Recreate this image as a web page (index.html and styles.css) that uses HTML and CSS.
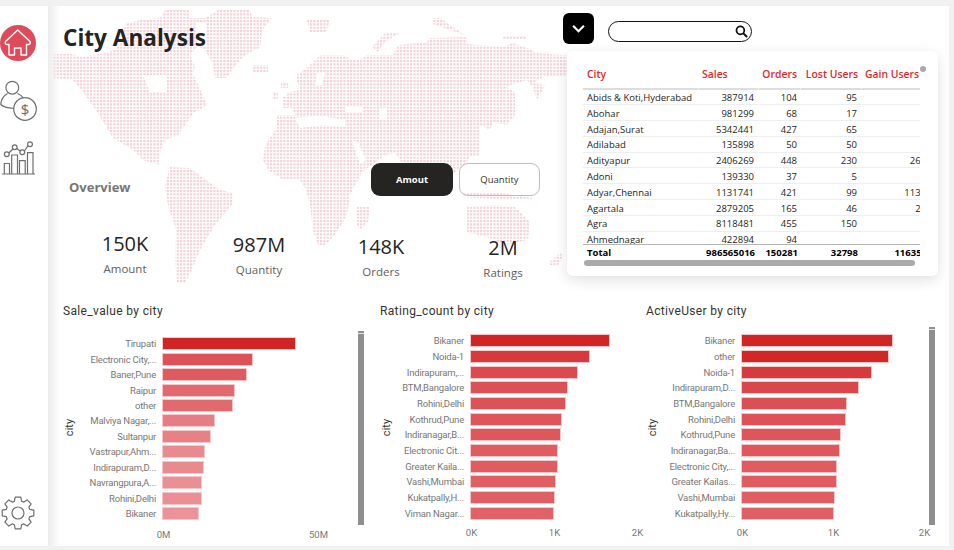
FILE: index.html
```html
<!DOCTYPE html>
<html lang="en">
<head>
  <meta charset="UTF-8">
  <title>City Analysis</title>
  <link rel="stylesheet" href="styles.css">
</head>
<body>
<div class="report">
  <!-- dotted world map, page coordinates -->
  <svg class="world_map" viewBox="0 0 954 300" width="954" height="300">
    <defs>
      <pattern id="dots" patternUnits="userSpaceOnUse" width="10" height="10">
        <path fill="#f3d3d9" d="M0 0h2.2v2.2H0zM3.33 0h2.2v2.2H3.33zM6.67 0h2.2v2.2H6.67zM0 3.33h2.2v2.2H0zM3.33 3.33h2.2v2.2H3.33zM6.67 3.33h2.2v2.2H6.67zM0 6.67h2.2v2.2H0zM3.33 6.67h2.2v2.2H3.33zM6.67 6.67h2.2v2.2H6.67z"></path>
      </pattern>
    </defs>
    <path fill="url(#dots)" fill-rule="evenodd" d="M53 54L72 54 80 57 100 54 115 50 122 38 125 24 140 20 160 18 165 10 190 10 190 18 205 18 218 10 250 10 252 17 272 18 262 30 260 48 250 52 240 60 226 78 215 78 212 62 205 50 198 46 190 55 195 66 193 74 205 100 207 106 195 112 185 125 178 135 165 140 160 152 160 165 143 160 133 150 113 138 97 112 83 92 73 80 53 78Z
      M143 75L167 75 167 92 150 92Z
      M196 22L206 22 206 46 198 46Z
      M253 65L268 65 268 72 253 72Z
      M273 92L278 92 278 100 273 100Z M281 82L288 82 288 88 281 88Z
      M307 20L330 20 326 32 310 32Z M372 47L385 33 400 33 385 42 378 52Z M433 18L440 18 465 35 450 30 433 24Z M503 36L526 36 526 39 503 39Z
      M170 167L190 168 220 190 233 193 232 205 215 225 200 250 192 270 185 283 177 283 175 260 176 230 168 205 165 185Z
      M320 55L343 55 353 60 363 58 367 55 393 55 398 45 427 42 430 38 467 37 467 44 503 47 513 43 527 48 537 53 563 55 570 55 570 75 543 77 533 83 545 85 537 100 533 88 527 80 510 85 507 88 515 92 515 117 510 120 507 125 493 122 490 130 480 125 480 155 470 157 465 165 458 170 452 175 452 193 444 193 440 175 432 170 428 165 417 180 410 180 400 160 395 153 385 155 372 165 362 172 358 180 350 195 347 215 335 235 325 245 318 245 313 230 310 205 306 190 300 180 283 180 268 170 263 160 265 145 277 128 277 115 295 115 292 108 283 108 283 97 290 92 300 90 297 80 297 75 307 68Z
      M295 118L320 116 345 120 345 127 322 125 300 128Z M345 107L362 107 362 112 345 112Z M380 108L387 108 387 120 380 120Z M318 72L325 72 322 85 315 85Z M352 140L358 142 366 160 360 164Z
      M357 207L370 207 368 222 360 230 357 225Z
      M467 207L495 205 515 207 530 222 528 240 505 245 490 238 467 232Z
      M463 193L500 193 533 198 533 200 495 199 463 197Z
      M550 262L560 253 563 256 558 265 550 265Z"></path>
  </svg>

  <nav class="sidebar">
    <svg class="home_icon" viewBox="0 0 36 36" width="36" height="36">
      <circle cx="18" cy="18" r="18" fill="#de4b5b"></circle>
      <path d="M17.7 5L5.5 16.5Q4.5 19.5 7 19.5H9V30H14.5V23H21V30H26.5V19.5H28.5Q31 19.5 30 16.5Z" fill="none" stroke="#fff" stroke-width="1.4" stroke-linejoin="round"></path>
    </svg>
    <svg class="nav_icon" viewBox="0 0 38 42" width="38" height="42">
      <circle cx="12.3" cy="7.7" r="6.4"></circle>
      <path d="M14 28.5C8 28 3 27 .8 24.5 1 19 4 15.5 7.5 13.5M17.5 13.5C20 14.5 22 16 23.5 18"></path>
      <circle cx="25" cy="29" r="11.3"></circle>
      <text x="25" y="34.5" text-anchor="middle" class="coin_text">$</text>
    </svg>
    <svg class="nav_icon" viewBox="0 0 38 36" width="38" height="36">
      <path d="M4.3 32.7V22.5H9.5V32.7M11.7 32.7V14H17.5V32.7M19.5 32.7V19.7H25.2V32.7M27.5 32.7V11.7H33V32.7M2 33H35"></path>
      <path d="M8.8 12L13 8M16.7 7.5L20.5 10.2M24.3 10L28 4.8"></path>
      <circle cx="6.8" cy="13.2" r="2.4"></circle>
      <circle cx="14.7" cy="6.2" r="2.4"></circle>
      <circle cx="22.3" cy="11.2" r="2.4"></circle>
      <circle cx="30" cy="3.2" r="2.4"></circle>
    </svg>
    <svg class="nav_icon gear_icon" viewBox="-17 -17 34 34" width="34" height="34">
      <polygon stroke-linejoin="round" points="-3.6,-11.8 -2.8,-15.8 2.8,-15.8 3.6,-11.8 5.8,-10.9 9.2,-13.1 13.1,-9.2 10.9,-5.8 11.8,-3.6 15.8,-2.8 15.8,2.8 11.8,3.6 10.9,5.8 13.1,9.2 9.2,13.1 5.8,10.9 3.6,11.8 2.8,15.8 -2.8,15.8 -3.6,11.8 -5.8,10.9 -9.2,13.1 -13.1,9.2 -10.9,5.8 -11.8,3.6 -15.8,2.8 -15.8,-2.8 -11.8,-3.6 -10.9,-5.8 -13.1,-9.2 -9.2,-13.1 -5.8,-10.9"></polygon>
      <circle r="6"></circle>
    </svg>
  </nav>

  <main class="content">
    <section class="hero">
      <div class="hero_left">
        <h1 class="page_title">City Analysis</h1>
        <div class="overview_row">
          <span class="overview_label">Overview</span>
          <div class="toggle_group">
            <button class="toggle toggle_on">Amout</button>
            <button class="toggle">Quantity</button>
          </div>
        </div>
        <div class="kpi_row">
          <div class="kpi"><div class="kpi_value">150K</div><div class="kpi_label">Amount</div></div>
          <div class="kpi"><div class="kpi_value">987M</div><div class="kpi_label">Quantity</div></div>
          <div class="kpi"><div class="kpi_value">148K</div><div class="kpi_label">Orders</div></div>
          <div class="kpi"><div class="kpi_value">2M</div><div class="kpi_label">Ratings</div></div>
        </div>
      </div>

      <div class="hero_right">
        <div class="controls">
          <button class="dropdown_btn">
            <svg viewBox="0 0 16 10" width="15" height="9"><path d="M2 2L8 8 14 2" fill="none" stroke="#fff" stroke-width="2.4"></path></svg>
          </button>
          <div class="search_box">
            <svg viewBox="0 0 14 14" width="13" height="13"><circle cx="5.8" cy="5.8" r="4.2" fill="none" stroke="#111" stroke-width="1.9"></circle><path d="M9 9L13 13" stroke="#111" stroke-width="2.2"></path></svg>
          </div>
        </div>
        <div class="table_card">
          <span class="scroll_dot"></span>
          <div class="city_table">
            <div class="row head_row">
              <div class="cell col_left">City</div><div class="cell col_left">Sales</div><div class="cell">Orders</div><div class="cell">Lost Users</div><div class="cell col_left">Gain Users</div>
            </div>
            <div class="table_body">
              <div class="row"><div class="cell col_left">Abids &amp; Koti,Hyderabad</div><div class="cell">387914</div><div class="cell">104</div><div class="cell">95</div><div class="cell"></div></div>
              <div class="row"><div class="cell col_left">Abohar</div><div class="cell">981299</div><div class="cell">68</div><div class="cell">17</div><div class="cell"></div></div>
              <div class="row"><div class="cell col_left">Adajan,Surat</div><div class="cell">5342441</div><div class="cell">427</div><div class="cell">65</div><div class="cell"></div></div>
              <div class="row"><div class="cell col_left">Adilabad</div><div class="cell">135898</div><div class="cell">50</div><div class="cell">50</div><div class="cell"></div></div>
              <div class="row"><div class="cell col_left">Adityapur</div><div class="cell">2406269</div><div class="cell">448</div><div class="cell">230</div><div class="cell">265</div></div>
              <div class="row"><div class="cell col_left">Adoni</div><div class="cell">139330</div><div class="cell">37</div><div class="cell">5</div><div class="cell"></div></div>
              <div class="row"><div class="cell col_left">Adyar,Chennai</div><div class="cell">1131741</div><div class="cell">421</div><div class="cell">99</div><div class="cell">1130</div></div>
              <div class="row"><div class="cell col_left">Agartala</div><div class="cell">2879205</div><div class="cell">165</div><div class="cell">46</div><div class="cell">24</div></div>
              <div class="row"><div class="cell col_left">Agra</div><div class="cell">8118481</div><div class="cell">455</div><div class="cell">150</div><div class="cell"></div></div>
              <div class="row"><div class="cell col_left">Ahmednagar</div><div class="cell">422894</div><div class="cell">94</div><div class="cell"></div><div class="cell"></div></div>
            </div>
            <div class="row total_row">
              <div class="cell col_left">Total</div><div class="cell">986565016</div><div class="cell">150281</div><div class="cell">32798</div><div class="cell">116350</div>
            </div>
          </div>
          <div class="table_scroll"></div>
        </div>
      </div>
    </section>

    <section class="charts">
      <div class="chart chart_sales">
        <div class="chart_title">Sale_value by city</div>
        <div class="plot">
          <div class="axis_name"><span>city</span></div>
          <div class="bars_area">
            <div class="bars">
              <div class="bar_row"><span class="bar_label">Tirupati</span><span class="bar" style="width:132px;background:#d12424"></span></div>
              <div class="bar_row"><span class="bar_label">Electronic City,...</span><span class="bar" style="width:89px;background:#dc5258"></span></div>
              <div class="bar_row"><span class="bar_label">Baner,Pune</span><span class="bar" style="width:83px;background:#de5a5e"></span></div>
              <div class="bar_row"><span class="bar_label">Raipur</span><span class="bar" style="width:71px;background:#e26a6e"></span></div>
              <div class="bar_row"><span class="bar_label">other</span><span class="bar" style="width:69px;background:#e26a6e"></span></div>
              <div class="bar_row"><span class="bar_label">Malviya Nagar,...</span><span class="bar" style="width:51px;background:#e67d82"></span></div>
              <div class="bar_row"><span class="bar_label">Sultanpur</span><span class="bar" style="width:47px;background:#e68286"></span></div>
              <div class="bar_row"><span class="bar_label">Vastrapur,Ahm...</span><span class="bar" style="width:41px;background:#e88b8f"></span></div>
              <div class="bar_row"><span class="bar_label">Indirapuram,D...</span><span class="bar" style="width:40px;background:#e88b8f"></span></div>
              <div class="bar_row"><span class="bar_label">Navrangpura,A...</span><span class="bar" style="width:38px;background:#ea9095"></span></div>
              <div class="bar_row"><span class="bar_label">Rohini,Delhi</span><span class="bar" style="width:38px;background:#ea9095"></span></div>
              <div class="bar_row"><span class="bar_label">Bikaner</span><span class="bar" style="width:35px;background:#eb9398"></span></div>
            </div>
            <div class="value_axis"><span class="tick">0M</span><span class="tick">50M</span></div>
          </div>
          <div class="plot_scroll"></div>
        </div>
      </div>

      <div class="chart chart_rating">
        <div class="chart_title">Rating_count by city</div>
        <div class="plot">
          <div class="axis_name"><span>city</span></div>
          <div class="bars_area">
            <div class="bars">
              <div class="bar_row"><span class="bar_label">Bikaner</span><span class="bar" style="width:138px;background:#d12424"></span></div>
              <div class="bar_row"><span class="bar_label">Noida-1</span><span class="bar" style="width:118px;background:#d63a3d"></span></div>
              <div class="bar_row"><span class="bar_label">Indirapuram,...</span><span class="bar" style="width:106px;background:#da4a4e"></span></div>
              <div class="bar_row"><span class="bar_label">BTM,Bangalore</span><span class="bar" style="width:96px;background:#dc5155"></span></div>
              <div class="bar_row"><span class="bar_label">Rohini,Delhi</span><span class="bar" style="width:94px;background:#dc5357"></span></div>
              <div class="bar_row"><span class="bar_label">Kothrud,Pune</span><span class="bar" style="width:90px;background:#dd5659"></span></div>
              <div class="bar_row"><span class="bar_label">Indiranagar,B...</span><span class="bar" style="width:89px;background:#dd575b"></span></div>
              <div class="bar_row"><span class="bar_label">Electronic Cit...</span><span class="bar" style="width:86px;background:#df5c60"></span></div>
              <div class="bar_row"><span class="bar_label">Greater Kaila...</span><span class="bar" style="width:86px;background:#df5c60"></span></div>
              <div class="bar_row"><span class="bar_label">Vashi,Mumbai</span><span class="bar" style="width:84px;background:#df5f63"></span></div>
              <div class="bar_row"><span class="bar_label">Kukatpally,H...</span><span class="bar" style="width:83px;background:#df6064"></span></div>
              <div class="bar_row"><span class="bar_label">Viman Nagar...</span><span class="bar" style="width:82px;background:#e06266"></span></div>
            </div>
            <div class="value_axis"><span class="tick">0K</span><span class="tick">1K</span><span class="tick">2K</span></div>
          </div>
        </div>
      </div>

      <div class="chart chart_active">
        <div class="chart_title">ActiveUser by city</div>
        <div class="plot">
          <div class="axis_name"><span>city</span></div>
          <div class="bars_area">
            <div class="bars">
              <div class="bar_row"><span class="bar_label">Bikaner</span><span class="bar" style="width:150px;background:#d12424"></span></div>
              <div class="bar_row"><span class="bar_label">other</span><span class="bar" style="width:146px;background:#d22727"></span></div>
              <div class="bar_row"><span class="bar_label">Noida-1</span><span class="bar" style="width:129px;background:#d63a3d"></span></div>
              <div class="bar_row"><span class="bar_label">Indirapuram,D...</span><span class="bar" style="width:116px;background:#da474b"></span></div>
              <div class="bar_row"><span class="bar_label">BTM,Bangalore</span><span class="bar" style="width:104px;background:#db5054"></span></div>
              <div class="bar_row"><span class="bar_label">Rohini,Delhi</span><span class="bar" style="width:103px;background:#dc5257"></span></div>
              <div class="bar_row"><span class="bar_label">Kothrud,Pune</span><span class="bar" style="width:98px;background:#dd565a"></span></div>
              <div class="bar_row"><span class="bar_label">Indiranagar,Ba...</span><span class="bar" style="width:97px;background:#dd575b"></span></div>
              <div class="bar_row"><span class="bar_label">Electronic City,...</span><span class="bar" style="width:94px;background:#df5c60"></span></div>
              <div class="bar_row"><span class="bar_label">Greater Kailas...</span><span class="bar" style="width:94px;background:#df5c60"></span></div>
              <div class="bar_row"><span class="bar_label">Vashi,Mumbai</span><span class="bar" style="width:92px;background:#df5e62"></span></div>
              <div class="bar_row"><span class="bar_label">Kukatpally,Hy...</span><span class="bar" style="width:91px;background:#df6064"></span></div>
            </div>
            <div class="value_axis"><span class="tick">0K</span><span class="tick">1K</span><span class="tick">2K</span></div>
          </div>
          <div class="plot_scroll"></div>
        </div>
      </div>
    </section>
  </main>
</div>
</body>
</html>
```

FILE: styles.css
```css
* {
    box-sizing: border-box;
}
html, body {
    margin: 0;
    height: 100%;
    overflow: hidden;
}
body {
    background: #f1f1f1;
    font-family: "Open Sans", "Liberation Sans", sans-serif;
    color: #252423;
}
button {
    font-family: inherit;
    cursor: pointer;
}

/* report page */
.report {
    position: relative;
    display: flex;
    width: 949px;
    height: 540px;
    margin-top: 6px;
    background: #fff;
    overflow: hidden;
}
.world_map {
    position: absolute;
    left: 0;
    top: -6px;
}

/* left nav */
.sidebar {
    position: relative;
    display: flex;
    flex-direction: column;
    flex: none;
    width: 48px;
    padding: 19px 0 16px;
    gap: 19px;
    background: #fff;
}
.home_icon {
    display: block;
}
.nav_icon {
    display: block;
    fill: none;
    stroke: #6e6e6e;
    stroke-width: 1.2;
}
.coin_text {
    font-family: "Open Sans", sans-serif;
    font-size: 15px;
    fill: #666;
    stroke: none;
}
.gear_icon {
    margin-top: auto;
    margin-left: 1px;
}

.content {
    position: relative;
    flex: 1;
    display: flex;
    flex-direction: column;
    min-width: 0;
    background: linear-gradient(to right, rgba(236,236,236,.95), rgba(255,255,255,0) 12px);
}

/* top part */
.hero {
    position: relative;
    display: grid;
    grid-template-columns: 515px 1fr;
    height: 284px;
}
.hero_left {
    padding: 17px 0 0 15px;
}
.page_title {
    margin: 0;
    font-size: 22.6px;
    line-height: 30px;
    font-weight: 700;
    color: #252423;
}
.overview_row {
    display: flex;
    justify-content: space-between;
    align-items: flex-start;
    width: 477px;
    margin-top: 110px;
}
.overview_label {
    margin: 15px 0 0 6px;
    font-size: 13px;
    line-height: 18px;
    font-weight: 700;
    color: #767676;
}
.toggle_group {
    display: flex;
    gap: 6px;
}
.toggle {
    width: 81px;
    height: 33px;
    padding: 0;
    border: 1px solid #bdbdbd;
    border-radius: 9px;
    background: transparent;
    font-size: 9.5px;
    color: #333;
}
.toggle_on {
    width: 82px;
    border: none;
    background: #252423;
    color: #fff;
    font-weight: 700;
}
.kpi_row {
    display: grid;
    grid-template-columns: 124px 144px 100px 144px;
    margin-top: 34px;
}
.kpi {
    text-align: center;
}
.kpi:nth-child(2) { margin-top: 1px; }
.kpi:nth-child(3) { margin-top: 3px; }
.kpi:nth-child(4) { margin-top: 4px; }
.kpi_value {
    font-size: 20px;
    line-height: 28px;
    color: #252423;
}
.kpi_label {
    margin-top: 3px;
    font-size: 11.5px;
    line-height: 16px;
    color: #605e5c;
}

/* top right */
.hero_right {
    display: flex;
    flex-direction: column;
    align-items: flex-start;
    padding-top: 7px;
}
.controls {
    display: flex;
    gap: 14px;
    align-items: flex-start;
}
.dropdown_btn {
    display: flex;
    align-items: center;
    justify-content: center;
    width: 31px;
    height: 31px;
    padding: 0;
    border: none;
    border-radius: 6px;
    background: #000;
}
.search_box {
    display: flex;
    align-items: center;
    justify-content: flex-end;
    width: 144px;
    height: 21px;
    margin-top: 8px;
    padding-right: 3px;
    border: 1.5px solid #111;
    border-radius: 11px;
    background: #fff;
}
.table_card {
    position: relative;
    width: 371px;
    height: 225px;
    margin: 7px 0 0 4px;
    padding: 16px 0 0 16px;
    border-radius: 6px;
    background: #fff;
    box-shadow: 0 4px 14px rgba(0,0,0,.12);
}
.scroll_dot {
    position: absolute;
    left: 353px;
    top: 15px;
    width: 6px;
    height: 6px;
    border-radius: 50%;
    background: #a9a9a9;
}
.city_table {
    width: 337px;
    overflow: hidden;
    font-size: 9.5px;
}
.row {
    display: grid;
    grid-template-columns: 116px 60px 42px 61px 66px;
    width: 345px;
}
.cell {
    padding: 1.5px 4px 0;
    border-right: 1px solid #fff;
    border-bottom: 1px solid #eee;
    text-align: right;
    line-height: 13.3px;
    white-space: nowrap;
    color: #252423;
}
.col_left {
    text-align: left;
}
.row .cell:nth-child(3) {
    padding-right: 3px;
}
.row .cell:nth-child(5) {
    padding-right: 1px;
}
.head_row .cell {
    padding: 0 0 0 3px;
    height: 22.5px;
    line-height: 14px;
    border-bottom: 2px solid #ddd;
    font-weight: 600;
    font-size: 10.4px;
    color: #e5262c;
}
.head_row .cell:nth-child(1) {
    padding-left: 4px;
}
.head_row .cell:nth-child(3),
.head_row .cell:nth-child(4) {
    padding: 0 3px 0 0;
}
.table_body {
    height: 154.5px;
    overflow: hidden;
}
.total_row {
    border-top: 1px solid #b5b5b5;
}
.total_row .cell {
    padding-top: 1px;
    border: none;
    font-weight: 700;
    color: #000;
    line-height: 14px;
}
.table_scroll {
    width: 331px;
    height: 6px;
    margin-left: 1px;
    border-radius: 3px;
    background: #aaa;
}

/* charts */
.charts {
    display: grid;
    grid-template-columns: 317px 266px 289px;
    padding-left: 15px;
}
.chart_sales {
    padding-right: 16px;
}
.chart_title {
    height: 23px;
    padding-top: 14px;
    box-sizing: content-box;
    font-family: Roboto, sans-serif;
    font-size: 12px;
    line-height: 14px;
    letter-spacing: .35px;
    color: #333;
}
.plot {
    display: flex;
    align-items: flex-start;
}
.axis_name {
    flex: none;
    display: flex;
    align-items: center;
    justify-content: center;
    width: 14px;
    height: 200px;
    font-family: Roboto, sans-serif;
    font-size: 11px;
    color: #333;
}
.axis_name span {
    transform: rotate(-90deg);
}
.bars_area {
    flex: 1;
    min-width: 0;
}
.bars {
    display: grid;
    grid-auto-rows: 15.67px;
    margin-top: 6px;
}
.chart_sales .bars {
    grid-auto-rows: 15.45px;
    margin-top: 9px;
}
.bar_row {
    display: flex;
    align-items: center;
    gap: 7px;
    font-family: Roboto, sans-serif;
    font-size: 9.5px;
    letter-spacing: -.2px;
    color: #777;
}
.bar_label {
    flex: none;
    text-align: right;
    white-space: nowrap;
}
.chart_sales .bar_label { width: 79px; }
.chart_rating .bar_label { width: 70px; }
.chart_active .bar_label { width: 75px; }
.bar {
    display: block;
    height: 11px;
    box-shadow: 0 0 0 1px #f7c6c9;
}
.value_axis {
    display: flex;
    justify-content: space-between;
    margin-top: 6px;
    font-family: Roboto, sans-serif;
    font-size: 9.5px;
    line-height: 12px;
    color: #777;
}
.chart_sales .value_axis { width: 155px; margin-left: 86.5px; }
.chart_rating .value_axis { width: 166px; margin-left: 77.5px; }
.chart_active .value_axis { width: 182px; margin-left: 82.5px; }
.chart_sales .value_axis { margin-top: 8px; }
.tick {
    display: flex;
    justify-content: center;
    width: 0;
    white-space: nowrap;
}
.plot_scroll {
    flex: none;
    width: 6px;
    height: 198px;
    background: linear-gradient(#8f8f8f 2px, #e4e4e4 2px, #e4e4e4 3px, #8f8f8f 3px);
}
.chart_sales .plot_scroll {
    margin-top: 4px;
    height: 194px;
}
```
